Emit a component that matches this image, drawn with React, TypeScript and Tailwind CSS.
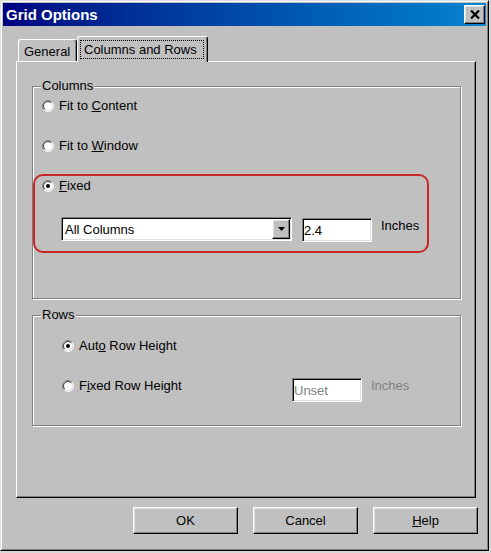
import React from "react";

function Radio({ checked }: { checked?: boolean }) {
  return (
    <svg width="12" height="12" viewBox="0 0 12 12" className="shrink-0 block">
      <circle cx="6" cy="6" r="5" fill="#fff" />
      <path d="M2.111 9.889 A5.5 5.5 0 0 1 9.889 2.111" fill="none" stroke="#808080" strokeWidth="1" />
      <path d="M9.889 2.111 A5.5 5.5 0 0 1 2.111 9.889" fill="none" stroke="#fff" strokeWidth="1" />
      <path d="M2.818 9.182 A4.5 4.5 0 0 1 9.182 2.818" fill="none" stroke="#404040" strokeWidth="1" />
      <path d="M9.182 2.818 A4.5 4.5 0 0 1 2.818 9.182" fill="none" stroke="#dfdfdf" strokeWidth="1" />
      {checked && <circle cx="6" cy="6" r="2" fill="#000" />}
    </svg>
  );
}

const sunken =
  "border border-t-[#808080] border-l-[#808080] border-r-white border-b-white shadow-[inset_1px_1px_0_#000,inset_-1px_-1px_0_#dfdfdf]";
const raised =
  "border border-t-white border-l-white border-r-black border-b-black shadow-[inset_-1px_-1px_0_#808080,inset_1px_1px_0_#dfdfdf]";
const group =
  "relative w-[429px] border border-[#808080] shadow-[inset_1px_1px_0_#fff,1px_1px_0_#fff]";

function RadioRow({
  checked,
  children,
}: {
  checked?: boolean;
  children: React.ReactNode;
}) {
  return (
    <div className="h-[20px] flex items-center gap-[5px]">
      <Radio checked={checked} />
      <span className="leading-[20px] whitespace-nowrap">{children}</span>
    </div>
  );
}

export default function App() {
  return (
    <div className="w-[491px] h-[553px] bg-[#d8d8d8] font-['Liberation_Sans',Arial,sans-serif] text-[13px] leading-[15px] text-black">
      <div className="w-[489px] h-[551px] bg-[#c0c0c0] border border-t-[#dfdfdf] border-l-[#dfdfdf] border-r-black border-b-black">
        <div className="h-full border border-t-white border-l-white border-r-[#808080] border-b-[#808080] p-px flex flex-col">
          {/* Title bar */}
          <div className="h-[23px] shrink-0 flex items-center pl-[3px] bg-linear-to-r from-[#000080] to-[#1084d0]">
            <span className="text-white font-bold text-[15px] leading-[18px]">Grid Options</span>
            <div className={`ml-auto mr-[1px] w-[21px] h-[19px] bg-[#c0c0c0] flex items-center justify-center ${raised}`}>
              <svg width="10" height="9" viewBox="0 0 10 9" className="block">
                <path d="M1 0.5 L9 8.5 M9 0.5 L1 8.5" stroke="#000" strokeWidth="2.2" fill="none" />
              </svg>
            </div>
          </div>

          {/* Body */}
          <div className="pl-[13px] pt-[10px]">
            {/* Tabs */}
            <div className="flex items-end h-[25px] pl-[2px]">
              <div className="w-[59px] h-[22px] pl-[5px] pt-px flex items-center border-t border-l border-r border-t-white border-l-white border-r-black rounded-tl-[3px] rounded-tr-[3px] shadow-[inset_-1px_0_0_#808080]">
                General
              </div>
              <div className="relative z-10 -mb-px w-[131px] h-[26px] bg-[#c0c0c0] border-t border-l border-r border-t-white border-l-white border-r-black rounded-tl-[3px] rounded-tr-[3px] shadow-[inset_-1px_0_0_#808080] pl-[2px] pt-[3px]">
                <div className="w-[124px] h-[19px] border border-dotted border-black px-[3px] leading-[17px] whitespace-nowrap">
                  Columns and Rows
                </div>
              </div>
            </div>

            {/* Panel */}
            <div className="w-[460px] h-[437px] border border-t-white border-l-white border-r-black border-b-black shadow-[inset_-1px_-1px_0_#808080] pt-[24px] pl-[15px]">
              {/* Columns group */}
              <div className={`${group} h-[213px] pt-[9px]`}>
                <span className="absolute -top-[9px] left-[8px] px-px bg-[#c0c0c0]">Columns</span>
                <div className="pl-[9px]">
                  <RadioRow>
                    Fit to <span className="underline">C</span>ontent
                  </RadioRow>
                  <div className="mt-[20px]">
                    <RadioRow>
                      Fit to <span className="underline">W</span>indow
                    </RadioRow>
                  </div>
                </div>
                <div className="mt-[18px] w-[396px] h-[79px] border-2 border-[#cc2424] rounded-[10px]">
                  <div className="pl-[7px]">
                    <RadioRow checked>
                      <span className="underline">F</span>ixed
                    </RadioRow>
                  </div>
                  <div className="mt-[21px] pl-[26px] flex items-start">
                    <div className={`w-[231px] h-[24px] bg-white p-px flex items-stretch ${sunken}`}>
                      <span className="flex-1 pl-[2px] flex items-center whitespace-nowrap">All Columns</span>
                      <div className={`w-[18px] bg-[#c0c0c0] flex items-center justify-center ${raised}`}>
                        <svg width="7" height="4" viewBox="0 0 7 4" className="block">
                          <polygon points="0,0 7,0 3.5,4" fill="#000" />
                        </svg>
                      </div>
                    </div>
                    <div className={`ml-[10px] mt-px w-[70px] h-[24px] bg-white px-px flex items-center ${sunken}`}>
                      2.4
                    </div>
                    <span className="ml-[9px] mt-px">Inches</span>
                  </div>
                </div>
              </div>

              {/* Rows group */}
              <div className={`${group} h-[111px] mt-[16px] pt-[20px]`}>
                <span className="absolute -top-[9px] left-[8px] px-px bg-[#c0c0c0]">Rows</span>
                <div className="pl-[29px]">
                  <RadioRow checked>
                    Aut<span className="underline">o</span> Row Height
                  </RadioRow>
                  <div className="mt-[20px] flex items-start">
                    <div className="w-[230px]">
                      <RadioRow>
                        F<span className="underline">i</span>xed Row Height
                      </RadioRow>
                    </div>
                    <div className={`mt-[2px] w-[70px] h-[24px] bg-white px-px flex items-center text-[#808080] ${sunken}`}>
                      Unset
                    </div>
                    <span className="ml-[9px] leading-[20px] text-[#808080]">Inches</span>
                  </div>
                </div>
              </div>
            </div>

            {/* Buttons */}
            <div className="mt-[9px] flex justify-end gap-[15px] pr-[8px]">
              <div className={`w-[105px] h-[27px] flex items-center justify-center ${raised}`}>OK</div>
              <div className={`w-[105px] h-[27px] flex items-center justify-center ${raised}`}>Cancel</div>
              <div className={`w-[105px] h-[27px] flex items-center justify-center ${raised}`}>
                <span>
                  <span className="underline">H</span>elp
                </span>
              </div>
            </div>
          </div>
        </div>
      </div>
    </div>
  );
}
